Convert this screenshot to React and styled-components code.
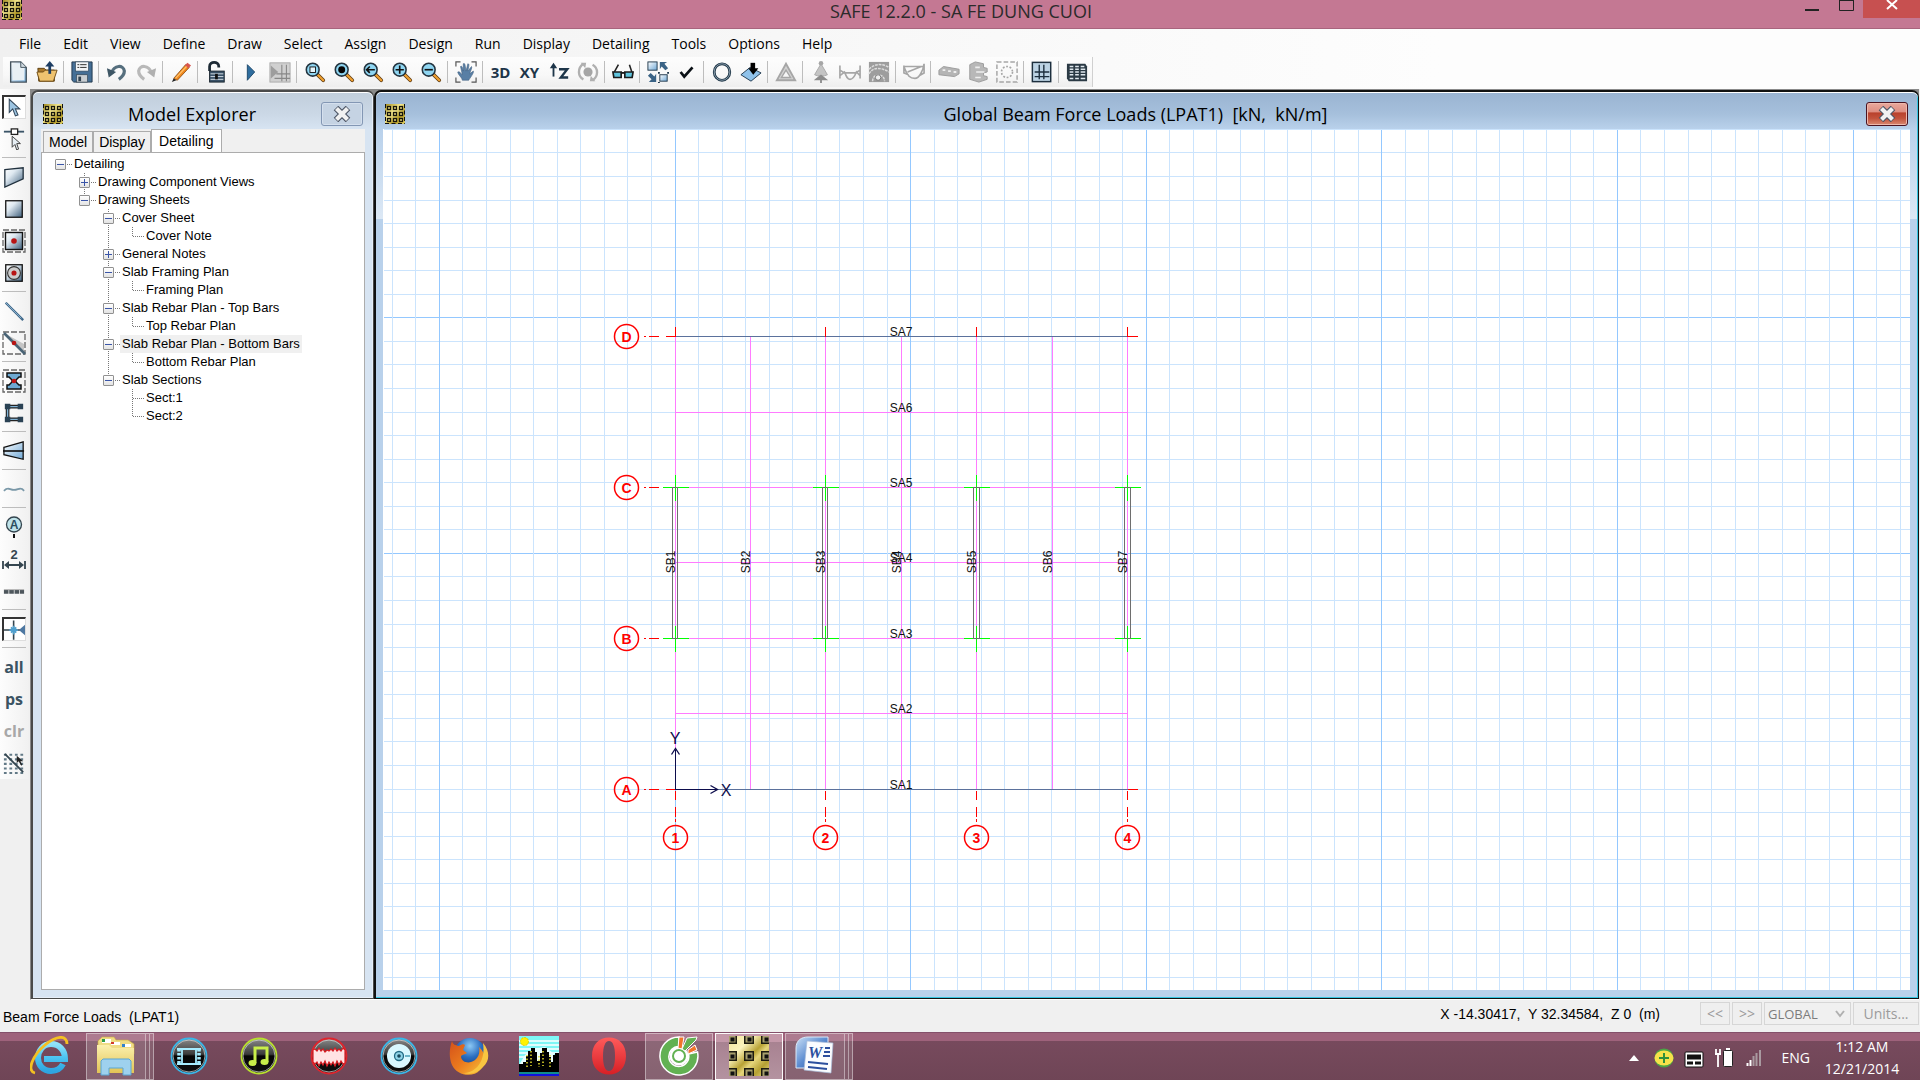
import React from 'react';
import styled, { createGlobalStyle, css } from 'styled-components';

const ui = '"Open Sans", "Noto Sans", sans-serif';
const sans = '"Liberation Sans", Arial, sans-serif';

const GlobalStyle = createGlobalStyle`
  *, *::before, *::after { box-sizing: border-box; }
  body { margin: 0; background: #f0f0f0; color: #000; font-family: ${ui}; }
  button, select { font: inherit; color: inherit; margin: 0; padding: 0; border: 0; background: none; }
  ul { list-style: none; margin: 0; padding: 0; }
  svg { display: block; }
`;

const Page = styled.div`
  display: flex;
  flex-direction: column;
  height: 100vh;
  overflow: hidden;
`;

/* ---------- application title bar ---------- */

const TitleBar = styled.header`
  display: grid;
  grid-template-columns: 1fr auto 1fr;
  align-items: start;
  height: 29px;
  flex: none;
  padding-left: 2px;
  background: #c47893;
  border-bottom: 1px solid #a8647d;
`;

const AppTitle = styled.h1`
  margin: 0;
  font-size: 18px;
  line-height: 22px;
  font-weight: 400;
  color: #2b2b2b;
`;

const WindowControls = styled.div`
  display: flex;
  justify-content: flex-end;
`;

const ControlButton = styled.button`
  display: flex;
  justify-content: center;
  width: ${(p) => (p.$close ? 57 : 34)}px;
  height: 18px;
  background: ${(p) => (p.$close ? '#c75050' : 'transparent')};
`;

/* ---------- menu ---------- */

const MenuBar = styled.nav`
  display: flex;
  flex: none;
  height: 28px;
  padding: 1px 8px 0;
  background: linear-gradient(90deg, #f0f0f0, #fdfdfd 75%);
`;

const MenuItem = styled.button`
  padding: 0 11px;
  font-size: 14px;
  line-height: 28px;
`;

/* ---------- toolbars ---------- */

const ToolRow = styled.div`
  display: flex;
  flex: none;
  height: 32px;
  padding: 0 3px;
  background: linear-gradient(90deg, #f0f0f0, #fdfdfd 75%);
`;

const TopTools = styled.div`
  display: flex;
  align-items: center;
  height: 30px;
  padding-right: 1px;
  border-right: 1px solid #d0d0d0;
  background: linear-gradient(#fdfdfd, #f8f8f8 60%, #eeeeee);
`;

const Separator = styled.span`
  flex: none;
  ${(p) => (p.$vertical
    ? css`width: 1px; height: 22px; margin: 0 3px 0 2px;`
    : css`width: 24px; height: 1px; margin: 2px 0 3px 2px;`)}
  background: #bdbdbd;
`;

const ToolButton = styled.button`
  display: flex;
  align-items: center;
  justify-content: center;
  flex: none;
  width: 29px;
  height: 26px;
  font-size: 15px;
  line-height: 20px;
  font-weight: 700;
  color: #1d3549;
`;

const SideTools = styled.div`
  display: flex;
  flex-direction: column;
  align-self: flex-start;
  width: 28px;
  padding-top: 2px;
  background: linear-gradient(90deg, #fdfdfd, #f1f1f1);
`;

const SideButton = styled.button`
  display: flex;
  align-items: center;
  justify-content: center;
  flex: none;
  width: 24px;
  height: 24px;
  margin: 4px 0 4px 2px;
  font-size: 16px;
  line-height: 20px;
  font-weight: 700;
  color: ${(p) => (p.disabled ? '#a8a8a8' : '#3b5363')};
  ${(p) => p.$pressed && css`
    background: #fff;
    border-top: 2px solid #333;
    border-left: 2px solid #333;
    border-right: 1px solid #ddd;
    border-bottom: 1px solid #ddd;
  `}
`;

/* ---------- work area ---------- */

const Work = styled.div`
  display: flex;
  flex: 1;
  min-height: 0;
`;

const Rail = styled.aside`
  display: flex;
  flex: none;
  width: 30px;
  background: #f0f0f0;
`;

const Desktop = styled.main`
  display: flex;
  flex: 1;
  min-width: 0;
  margin-right: 1px;
  border: 1px solid #8a8a8a;
  border-bottom-color: #fff;
  border-right: 0;
  background: #8a8a8a;
`;

const frameTop = (p) => (p.$active
  ? 'linear-gradient(#99b3d1, #a6c0dc 60%, #b9d1eb)'
  : 'linear-gradient(#c1cedb, #cbd8e6 60%, #d7e4f2)');

const Window = styled.section`
  display: flex;
  flex-direction: column;
  ${(p) => (p.$active ? css`flex: 1;` : css`flex: none; width: 343px;`)}
  min-width: 0;
  padding: 0 8px 8px ${(p) => (p.$active ? 7 : 8)}px;
  border: 2px solid ${(p) => (p.$active ? '#111' : '#4a4a4a')};
  border-right-width: 1px;
  border-bottom-width: 1px;
  border-radius: 7px 7px 0 0;
  box-shadow: inset 0 1px 0 #fff, inset -1px -1px 0 ${(p) => (p.$active ? '#35c5e0' : '#e6eef8')};
  background:
    ${frameTop} 0 0 / 100% 37px no-repeat,
    linear-gradient(${(p) => (p.$active ? '#b9d1eb, #dce8f5' : '#d7e4f2, #d7e4f2')}) 0 37px / 100% 90px no-repeat,
    ${(p) => (p.$active ? '#b9d1eb' : '#d7e4f2')};
`;

const WindowTitle = styled.div`
  display: flex;
  align-items: center;
  flex: none;
  height: 37px;
  padding: 7px 2px 0;
`;

const WindowCaption = styled.h2`
  flex: 1;
  margin: 0;
  font-size: 18px;
  line-height: 24px;
  font-weight: 400;
  text-align: center;
  white-space: pre;
`;

const CloseButton = styled.button`
  display: flex;
  align-items: center;
  justify-content: center;
  width: 42px;
  height: 24px;
  border-radius: 3px;
  ${(p) => (p.$active
    ? css`
      border: 1px solid #4b1320;
      box-shadow: inset 0 0 0 1px #eeb8ab;
      background: linear-gradient(#e9a99d, #dd8d80 42%, #b8402b 44%, #c2533c 70%, #d98a72);`
    : css`
      border: 1px solid #8397b4;
      box-shadow: inset 0 0 0 1px #d5e0ee;
      background: #c5d3e3;`)}
`;

const Tabs = styled.div`
  display: flex;
  align-items: flex-end;
  flex: none;
  height: 23px;
  padding-left: 2px;
  background: #f0f0f0;
`;

const Tab = styled.button`
  height: ${(p) => (p.$selected ? 24 : 21)}px;
  margin-bottom: ${(p) => (p.$selected ? -1 : 0)}px;
  padding: 0 ${(p) => (p.$selected ? 7 : 5)}px ${(p) => (p.$selected ? 2 : 0)}px;
  border: 1px solid #acacac;
  border-bottom: 0;
  background: ${(p) => (p.$selected ? '#fff' : '#f0f0f0')};
  font-family: ${sans};
  font-size: 14px;
  line-height: 18px;
`;

const TabPanel = styled.div`
  flex: 1;
  min-height: 0;
  padding: 2px 0 0 13px;
  border: 1px solid #acacac;
  background: #fff;
`;

const TreeList = styled.ul`
  margin-left: ${(p) => (p.$root ? 0 : 24)}px;
`;

const TreeItem = styled.li`
  background: ${(p) => (p.$root ? 'none' : 'repeating-linear-gradient(#777 0 1px, transparent 1px 2px) 5px 0 no-repeat')};
  background-size: 1px ${(p) => (p.$last ? '10px' : '100%')};
`;

const TreeRow = styled.div`
  display: flex;
  align-items: center;
  height: 18px;
`;

const TreeToggle = styled.button`
  flex: none;
  width: 11px;
  height: 11px;
  border: 1px solid #919191;
  border-radius: 1px;
  background:
    linear-gradient(#3a55a8, #3a55a8) center / 7px 1px no-repeat,
    ${(p) => !p.$open && 'linear-gradient(#3a55a8, #3a55a8) center / 1px 7px no-repeat,'}
    linear-gradient(#fff, #e3e3e3);
`;

const TreeStem = styled.span`
  flex: none;
  width: ${(p) => (p.$leaf ? 11 : 5)}px;
  height: 1px;
  margin-left: ${(p) => (p.$leaf ? 6 : 1)}px;
  background: repeating-linear-gradient(90deg, #777 0 1px, transparent 1px 2px);
`;

const TreeLabel = styled.span`
  padding: 0 2px;
  background: ${(p) => (p.$marked ? '#f0f0f0' : 'transparent')};
  font-family: ${sans};
  font-size: 13px;
  line-height: 18px;
  white-space: nowrap;
`;

const PlanCanvas = styled.svg`
  flex: 1;
  width: 100%;
  min-height: 0;
  background: #fff;
  font-family: ${sans};
`;

/* ---------- status bar ---------- */

const StatusBar = styled.footer`
  display: flex;
  align-items: flex-start;
  gap: 2px;
  flex: none;
  height: 32px;
  padding: 2px 1px 0 3px;
  font-family: ${sans};
  font-size: 14px;
  line-height: 24px;
  white-space: pre;
`;

const StatusText = styled.span`
  flex: 1;
  padding-top: 3px;
`;

const Coordinates = styled.span`
  margin-right: 38px;
`;

const StatusButton = styled.button`
  width: ${(p) => (p.$wide ? 66 : 30)}px;
  height: 23px;
  border: 1px solid #d6d6d6;
  background: #efefef;
  color: #9b9b9b;
  font-family: ${ui};
  font-size: 14px;
  line-height: 20px;
`;

const SystemPicker = styled.label`
  display: flex;
  align-items: center;
  width: 87px;
  height: 23px;
  padding-right: 5px;
  border: 1px solid #d6d6d6;
  color: #7c7c7c;
`;

const SystemSelect = styled.select`
  flex: 1;
  min-width: 0;
  padding-left: 3px;
  appearance: none;
  opacity: 1;
  color: #7c7c7c;
  font-family: ${ui};
  font-size: 13px;
  line-height: 20px;
`;

/* ---------- taskbar ---------- */

const Taskbar = styled.div`
  display: flex;
  align-items: stretch;
  flex: none;
  height: 48px;
  padding: 0 18px 0 15px;
  border-top: 1px solid #84506a;
  background: linear-gradient(#9e627b 0 8px, #774a5d 8px, #6f4556);
  color: #fff;
`;

const TaskButton = styled.button`
  display: flex;
  align-items: center;
  justify-content: center;
  flex: none;
  width: 68px;
  height: 47px;
  margin: 0 1px;
  padding-bottom: 2px;
  ${(p) => p.$running && css`
    border: 1px solid rgba(255, 255, 255, ${p.$front ? 0.95 : 0.42});
    background: ${p.$front
      ? 'linear-gradient(#c498a9 0 8px, #a88291 8px, #b493a0)'
      : 'rgba(255, 255, 255, 0.16)'};
  `}
  ${(p) => p.$stack && css`
    width: 60px;
    margin-right: 0;
  `}
`;

const StackEdge = styled.span`
  width: 4px;
  height: 47px;
  border: 1px solid rgba(255, 255, 255, 0.42);
  border-left: 0;
  background: rgba(255, 255, 255, 0.12);
`;

const Tray = styled.div`
  display: flex;
  align-items: center;
  gap: 10px;
  margin-left: auto;
  padding-top: 2px;
`;

const TrayButton = styled.button`
  display: flex;
  align-items: center;
  justify-content: center;
  width: 20px;
  height: 24px;
`;

const Language = styled.span`
  padding: 0 2px 0 8px;
  font-size: 14px;
`;

const Clock = styled.time`
  width: 80px;
  font-size: 14px;
  line-height: 22px;
  text-align: center;
`;

/* ---------- icons ---------- */

const Svg = ({ s = 22, children }) => (
  <svg width={s} height={s} viewBox="0 0 24 24" fill="none" aria-hidden="true">{children}</svg>
);

const Gradients = () => (
  <svg width="0" height="0" aria-hidden="true">
    <defs>
      <linearGradient id="gold" x1="0" y1="0" x2="1" y2="1">
        <stop offset="0" stopColor="#f3e69a" /><stop offset=".3" stopColor="#fbf3bd" />
        <stop offset=".52" stopColor="#b8a234" /><stop offset=".62" stopColor="#e6d67c" />
        <stop offset=".8" stopColor="#b5a033" /><stop offset="1" stopColor="#e9db84" />
      </linearGradient>
      <linearGradient id="goldSmall" x1="0" y1="0" x2="1" y2="1">
        <stop offset="0" stopColor="#a08a1c" /><stop offset=".4" stopColor="#f4e88e" />
        <stop offset=".7" stopColor="#b39a26" /><stop offset="1" stopColor="#e2d36a" />
      </linearGradient>
      <linearGradient id="steel" x1="0" y1="0" x2="1" y2="1">
        <stop offset="0" stopColor="#fff" /><stop offset=".35" stopColor="#dfe9f1" /><stop offset="1" stopColor="#3e5f7c" />
      </linearGradient>
      <linearGradient id="sky" x1="0" y1="0" x2="1" y2="1">
        <stop offset="0" stopColor="#fff" /><stop offset="1" stopColor="#6fa8d6" />
      </linearGradient>
      <linearGradient id="ie" x1="0" y1="0" x2="0" y2="1">
        <stop offset="0" stopColor="#8fe3fb" /><stop offset=".5" stopColor="#4cc3f1" /><stop offset="1" stopColor="#2ea5e0" />
      </linearGradient>
      <linearGradient id="folder" x1="0" y1="0" x2="0" y2="1">
        <stop offset="0" stopColor="#fbf0ae" /><stop offset="1" stopColor="#e3c455" />
      </linearGradient>
      <linearGradient id="black" x1="0" y1="0" x2="0" y2="1">
        <stop offset="0" stopColor="#8b8b8b" /><stop offset=".45" stopColor="#3a3a3a" /><stop offset=".5" stopColor="#050505" /><stop offset="1" stopColor="#111" />
      </linearGradient>
      <linearGradient id="opera" x1="0" y1="0" x2="0" y2="1">
        <stop offset="0" stopColor="#ff5b5b" /><stop offset="1" stopColor="#d71f25" />
      </linearGradient>
      <linearGradient id="word" x1="0" y1="0" x2="1" y2="1">
        <stop offset="0" stopColor="#c9dff6" /><stop offset=".5" stopColor="#5b8bd0" /><stop offset="1" stopColor="#1f4aa0" />
      </linearGradient>
      <radialGradient id="globe" cx=".5" cy=".25" r=".7">
        <stop offset="0" stopColor="#8cc8f4" /><stop offset=".5" stopColor="#2b6ec0" /><stop offset="1" stopColor="#123a7c" />
      </radialGradient>
      <linearGradient id="fox" x1="0" y1="0" x2="1" y2="1">
        <stop offset="0" stopColor="#d4511a" /><stop offset=".5" stopColor="#ea7a1d" /><stop offset="1" stopColor="#f8c63c" />
      </linearGradient>
    </defs>
  </svg>
);

const SafeLogo = ({ size = 20 }) => {
  const small = size < 30;
  const spots = small ? [4, 16, 28] : [-2, 15, 32];
  return (
    <svg width={size} height={size} viewBox="0 0 40 40" aria-hidden="true">
      <rect width="40" height="40" fill={small ? 'url(#goldSmall)' : 'url(#gold)'} />
      {spots.map((y) => spots.map((x) => (small ? (
        <rect key={`${x}-${y}`} x={x + 1} y={y + 1} width="6" height="6" fill="#d9cc78" stroke="#17160c" strokeWidth="2.500" />
      ) : (
        <g key={`${x}-${y}`}>
          <rect x={x} y={y} width="10" height="10" fill="#1c1b10" />
          <rect x={x + 1.5} y={y + 1.5} width="7" height="7" fill="#a79f6c" />
          <rect x={x + 3.5} y={y + 3.5} width="4" height="4" fill="#111" />
        </g>
      ))))}
      {small && <path d="M1 0v40M0 39h40M39 0v40" stroke="#111" strokeWidth="2" strokeDasharray="8 5" />}
    </svg>
  );
};

const Glass = ({ children }) => (
  <Svg>
    <path d="M14 14l7 7" stroke="#5b3a12" strokeWidth="4" strokeLinecap="round" />
    <path d="M15 15l6 6" stroke="#f0a030" strokeWidth="2.400" strokeLinecap="round" />
    <circle cx="9.500" cy="9.500" r="7" fill="#8fd6f2" stroke="#24343f" strokeWidth="1.700" />
    {children}
  </Svg>
);

const g = '#a6a6a6';
const n = '#1d3549';

const topIcons = {
  New: <Svg><path d="M4 1h11l6 6v16H4z" fill="url(#sky)" stroke="#44525c" strokeWidth="1.500" /><path d="M6 3h8l5 5v13H6z" fill="#e9f0f4" /><path d="M15 1v6h6" fill="#cfd9e0" stroke="#44525c" /></Svg>,
  Open: <Svg><path d="M2 8h7l2 2h9v12H3z" fill="#a9772a" stroke="#5a3c0e" /><path d="M1 12h7l2-2h13l-4 12H4z" fill="#efc36f" stroke="#6b4a16" /><path d="M15 14V5" stroke="#1d3d63" strokeWidth="3" /><path d="M10 6l5-6 5 6z" fill="#1d3d63" /></Svg>,
  Save: <Svg><path d="M1 1h22v22H3l-2-2z" fill="#456f96" stroke="#1e3448" /><rect x="5" y="1" width="14" height="10" fill="#f2f5f7" stroke="#33485a" strokeWidth=".7" /><path d="M7 4h2m1 0h7M7 7h2m1 0h7" stroke="#222" /><rect x="6" y="15" width="12" height="8" fill="#c9ced2" stroke="#30404e" strokeWidth=".7" /><path d="M8 17h3v5H8z" fill="#30404e" /></Svg>,
  Undo: <Svg><path d="M6 13C9 4 19 4 20 11c0 5-3 7-6 9" stroke="#566f7e" strokeWidth="3.500" /><path d="M1 8l2 10 8-6z" fill="#3e5665" /></Svg>,
  Redo: <Svg><path d="M18 13C15 4 5 4 4 11c0 5 3 7 6 9" stroke="#b9b9b9" strokeWidth="3.500" /><path d="M23 8l-2 10-8-6z" fill="#b0b0b0" /></Svg>,
  Edit: <Svg><path d="M4 19L17 4l4 3L8 21z" fill="#f0871c" stroke="#7a3f07" strokeWidth=".8" /><path d="M16 5l3-3 4 3-3 3z" fill="#d8564e" /><path d="M4 19l-2 4 5-2z" fill="#222" /><path d="M6 19L18 6" stroke="#ffc36c" strokeWidth="1.300" /></Svg>,
  Unlock: <Svg><path d="M5 11V6c0-6 10-6 10 0v1" stroke="#1d2a35" strokeWidth="3" /><rect x="5" y="11" width="16" height="12" fill="#3a5268" stroke="#17232d" /><path d="M6 14h14M6 17h14M6 20h14" stroke="#dde5eb" strokeWidth="1" /><rect x="11" y="14" width="3" height="6" fill="#111" /></Svg>,
  Run: <Svg><path d="M8 4l8 8-8 9z" fill="#2f6d9e" stroke="#1b4669" /></Svg>,
  Mesh: <Svg><rect x="1" y="2" width="22" height="21" fill="#d0d0d0" stroke="#aaa" /><path d="M2 5l8 7-8 7z" fill="#9d9d9d" /><path d="M14 4v18M19 4v18M8 14h15M6 19h17" stroke="#888" strokeWidth="1.200" /></Svg>,
  'Zoom window': <Glass><rect x="6.500" y="6.500" width="6" height="6" stroke="#111" fill="#e6f6fc" /></Glass>,
  'Zoom all': <Glass><circle cx="9.500" cy="9.500" r="3.800" fill="#050505" /></Glass>,
  'Zoom previous': <Glass><path d="M5 9.500h9M8.500 6l-3.500 3.500L8.500 13" stroke="#111" strokeWidth="1.800" /></Glass>,
  'Zoom in': <Glass><path d="M5 9.500h9M9.500 5v9" stroke="#111" strokeWidth="1.800" /></Glass>,
  'Zoom out': <Glass><path d="M5 9.500h9" stroke="#111" strokeWidth="1.800" /></Glass>,
  Pan: <Svg><path d="M1 6V1h5M18 1h5v5M23 18v5h-5M6 23H1v-5" stroke="#555" strokeWidth="1.300" /><path d="M8 21c0-3-5-6-5-9 2-1 3 1 5 3L6 6c2-1 2 1 3 5l0-8c2-1 2 1 3 8l2-8c2 0 1 3 0 8l4-5c1 1-1 5-2 8l4-3c1 2-4 8-5 10z" fill="#587fa5" stroke="#3c5c7c" strokeWidth=".6" /></Svg>,
  'Axis Z': <Svg><path d="M6 17V6" stroke={n} strokeWidth="2" /><path d="M2 8l4-6 4 6z" fill={n} /><path d="M12 9h9l-7 9h8" stroke={n} strokeWidth="2.600" /></Svg>,
  Rotate: <Svg><circle cx="12" cy="12" r="5" fill="#a5a5a5" /><path d="M7 3C0 8 1 17 7 20M17 4c7 4 6 13 0 17" stroke="#b0b0b0" strokeWidth="2.600" /><path d="M4 2h6l-1 6zM20 22h-6l1-6z" fill="#b0b0b0" /></Svg>,
  Glasses: <Svg><path d="M2 13L7 4M22 13l-3-9" stroke="#222" strokeWidth="1.700" /><path d="M1 12h9v6H2zM14 12h9l-1 6h-8z" fill="#5fc3dc" stroke="#1b1b1b" strokeWidth="1.800" /><path d="M10 13h4" stroke="#1b1b1b" strokeWidth="2" /></Svg>,
  Extents: <Svg><rect x="1" y="1" width="10" height="9" fill="url(#sky)" stroke="#1d3549" /><rect x="14" y="15" width="8" height="7" fill="url(#sky)" stroke="#1d3549" /><path d="M14 1h8l-3 2 4 5-3 2-4-4-2 3zM10 23H2l3-3-4-4 3-3 4 4 2-3z" fill="#3a6386" /><path d="M12 13h2M22 13h2M12 24h2" stroke="#1d3549" strokeWidth="2" /></Svg>,
  Accept: <Svg><path d="M5 12l4 5 9-10" stroke="#0b1116" strokeWidth="3" /></Svg>,
  Ring: <Svg><ellipse cx="12" cy="12" rx="8.500" ry="9" stroke="#1f3647" strokeWidth="3" /><ellipse cx="12" cy="12" rx="8.500" ry="9" stroke="#a8bccb" strokeWidth=".8" /></Svg>,
  Assign: <Svg><path d="M1 15l10-8 12 6-11 9z" fill="#8fc2ea" stroke="#1d3549" /><path d="M14 2v8" stroke="#000" strokeWidth="5" /><path d="M9 8h11l-5.500 7z" fill="#000" /></Svg>,
  Undeformed: <Svg><path d="M12 3l10 18H2z" stroke={g} strokeWidth="2" fill="#d2d2d2" /><path d="M12 10l5 8H7z" fill="#f6f6f6" stroke={g} strokeWidth="1.500" /></Svg>,
  Reactions: <Svg><path d="M12 3l7 12c-3 2-11 2-14 0z" fill="#c4c4c4" stroke={g} /><circle cx="12" cy="2.500" r="2.500" fill={g} /><path d="M12 25v-6M7 20l5-4 5 4z" stroke="#8c8c8c" strokeWidth="2" fill="#8c8c8c" /></Svg>,
  Deformed: <Svg><path d="M1 5v14M23 5v14M1 10l5 3h12l5-3M1 16l5-4c2 5 3 8 6 8s5-3 7-8l4 4" stroke={g} strokeWidth="1.800" /></Svg>,
  Contours: <Svg><rect x="1" y="1" width="22" height="22" fill="#9d9d9d" /><path d="M1 14C6 6 14 7 23 12M1 9C8 2 16 3 23 7M5 22c0-9 13-9 13 0" stroke="#ddd" strokeWidth="1.600" strokeDasharray="3 1" /><circle cx="11" cy="18" r="3" fill="#eee" stroke="#777" /></Svg>,
  Moments: <Svg><path d="M1 5v8l5 2M23 3v10l-5 3M1 6h22M1 6c4 11 7 13 12 13S22 10 23 3M5 12l15-6" stroke={g} strokeWidth="1.800" /></Svg>,
  Beam: <Svg><path d="M1 10l5-4 17 3v5l-5 3-17-2z" fill="#b5b5b5" stroke="#999" /><path d="M5 10h3M11 11h3M17 12h3" stroke="#eee" strokeWidth="2" /></Svg>,
  Block: <Svg><path d="M3 4l6-3 9 2v4l4 1v4l-4 1v3l4 1v3l-9 3-10-3z" fill="#b8b8b8" stroke="#999" /><path d="M9 7h5M10 12h9M9 18h6" stroke="#eee" strokeWidth="1.800" /></Svg>,
  Region: <Svg><rect x="1" y="1" width="22" height="22" stroke={g} strokeWidth="1.600" strokeDasharray="5 2.300" /><circle cx="12" cy="12" r="6" stroke={g} strokeWidth="1.800" strokeDasharray="2 1.800" /></Svg>,
  Grid: <Svg><rect x="1.500" y="1.500" width="20" height="21" fill="#bcd3e4" stroke="#1d2f3e" strokeWidth="1.600" /><path d="M9 4v16M14 4v16M4 12h16M4 17h16" stroke="#1d2f3e" strokeWidth="1.500" /></Svg>,
  Tables: <Svg><path d="M1 3h20l2 3v16H3L1 19z" fill="#2b3a45" /><path d="M4 6h4M10 6h4M16 6h4M4 9h4M10 9h4M16 9h5M4 12h4M10 12h4M16 12h5M4 15h4M10 15h4M16 15h5M4 19h4M10 19h4M16 19h5" stroke="#dfe8ee" strokeWidth="1.700" /></Svg>,
};

const topTools = [
  'New', 'Open', '|', 'Save', '|', 'Undo', 'Redo', '|', 'Edit', '|', 'Unlock', '|', 'Run', 'Mesh', '|',
  'Zoom window', 'Zoom all', 'Zoom previous', 'Zoom in', 'Zoom out', '|', 'Pan', '|', '3D', 'XY', 'Axis Z', 'Rotate', '|',
  'Glasses', '|', 'Extents', 'Accept', '|', 'Ring', 'Assign', '|', 'Undeformed', '|', 'Reactions', 'Deformed', 'Contours', '|',
  'Moments', '|', 'Beam', 'Block', 'Region', '|', 'Grid', '|', 'Tables',
];

const Dashed = () => <rect x="1" y="1" width="22" height="22" stroke="#666" strokeWidth="1.300" strokeDasharray="6 2" />;

const sideIcons = {
  Select: <Svg><path d="M6 2v15l4-4 3 8 3-1-3-7h5z" fill="#9cc4e2" stroke="#33475a" strokeWidth="1.200" /></Svg>,
  Reshape: <Svg><path d="M1 4h22" stroke="#3b5568" strokeWidth="2" /><rect x="9" y="1" width="7" height="6" fill="#fff" stroke="#222" strokeWidth="1.400" /><path d="M10 9v12l3-3 2 6 2-1-2-6h4z" fill="#e6eef4" stroke="#333" /></Svg>,
  Area: <Svg><path d="M2 4l20-2v12L2 23z" fill="url(#steel)" stroke="#20303d" strokeWidth="1.400" /></Svg>,
  Rectangle: <Svg><rect x="3" y="3" width="18" height="18" fill="url(#steel)" stroke="#111" strokeWidth="1.400" /></Svg>,
  'Quick area': <Svg s={24}><Dashed /><rect x="3.500" y="3.500" width="17" height="17" fill="url(#steel)" stroke="#111" strokeWidth="1.400" /><circle cx="12" cy="12" r="2.800" fill="#b81414" /></Svg>,
  Column: <Svg><rect x="3" y="3" width="18" height="18" fill="url(#steel)" stroke="#111" strokeWidth="1.400" /><circle cx="12" cy="12" r="7" fill="#ccc" stroke="#333" strokeWidth="1.200" /><circle cx="12" cy="12" r="2.800" fill="#b81414" /></Svg>,
  Line: <Svg><path d="M3 3l19 19" stroke="#3f6788" strokeWidth="2.600" /><path d="M3 3l17 17" stroke="#8db5d3" strokeWidth="1" /></Svg>,
  'Quick line': <Svg s={24}><Dashed /><path d="M2 2l20 20v-9z" fill="#c5c5c5" /><path d="M2 2l21 21" stroke="#4a6476" strokeWidth="2.600" /><circle cx="12" cy="12" r="2.300" fill="#b81414" /></Svg>,
  Section: <Svg s={24}><Dashed /><path d="M5 4h14v4h-2l-3 3v2l3 3h2v4H5v-4h2l3-3v-2L7 8H5z" fill="#6ea9d2" stroke="#111" strokeWidth="1.500" /><circle cx="12" cy="12" r="2.300" fill="#c01414" /></Svg>,
  Strip: <Svg><path d="M20 5H5v14h15" stroke="#222" strokeWidth="4" /><path d="M20 5H5v14h15" stroke="#7fb2d6" strokeWidth="1.500" /><path d="M2 2h6v6H2zM16 2h6v6h-6zM2 16h6v6H2zM16 16h6v6h-6z" fill="#2a4254" /></Svg>,
  Taper: <Svg><path d="M1 8l21-6v19L1 16z" fill="url(#sky)" stroke="#111" strokeWidth="1.400" /><path d="M0 12h23" stroke="#111" strokeWidth="1.800" /></Svg>,
  Tendon: <Svg><path d="M1 14c5-5 6-1 11-1s7-4 11 1" stroke="#7a98a8" strokeWidth="2" /></Svg>,
  'Grid bubble': <Svg s={24}><circle cx="12" cy="9.500" r="7.500" fill="#bfe3ea" stroke="#34454f" strokeWidth="1.300" /><path d="M12 19v4" stroke="#111" strokeWidth="2" /><text x="12" y="14" textAnchor="middle" fontFamily="Liberation Sans, sans-serif" fontSize="12" fontWeight="700" fill="#2a4d60">A</text></Svg>,
  Dimension: <Svg s={24}><path d="M1 14v8M23 14v8M4 18h16" stroke="#34454f" strokeWidth="1.800" /><path d="M2 18l5-4v8zM22 18l-5-4v8z" fill="#34454f" /><text x="12" y="12" textAnchor="middle" fontFamily="Liberation Sans, sans-serif" fontSize="13" fontWeight="700" fill="#34454f">2</text></Svg>,
  Wall: <Svg><path d="M1 13h22" stroke="#4d565c" strokeWidth="4" strokeDasharray="5 .8" /><path d="M1 10.500h22" stroke="#aaa" /></Svg>,
  Snap: <Svg><path d="M11 1v22M0 12h22" stroke="#34454f" strokeWidth="1.800" /><path d="M11 7v10M6 12h10M8 9l6 6M14 9l-6 6" stroke="#4fa0cf" strokeWidth="2" /><path d="M24 6v12l-7-6z" fill="#4d77a1" /></Svg>,
  Clear: <Svg><path d="M1 3h22M1 8h22M1 13h22M1 18h22M1 23h22" stroke="#627986" strokeWidth="2.300" strokeDasharray="3 3" /><path d="M2 2l20 20" stroke="#34454f" strokeWidth="2" /><path d="M15 4v8l2-2 3 5 1-1-2-4h3z" fill="#222" /></Svg>,
};

const sideTools = [
  'Select', 'Reshape', '|', 'Area', 'Rectangle', 'Quick area', 'Column', '|', 'Line', 'Quick line', '|',
  'Section', 'Strip', '|', 'Taper', '|', 'Tendon', '|', 'Grid bubble', 'Dimension', 'Wall', '|', 'Snap', '|',
  'all', 'ps', 'clr', 'Clear',
];

/* ---------- taskbar icons ---------- */

const Big = ({ children }) => (
  <svg width="40" height="40" viewBox="0 0 40 40" fill="none" aria-hidden="true">{children}</svg>
);

const Disc = ({ rim, children }) => (
  <Big>
    <circle cx="20" cy="20" r="17.500" fill="url(#black)" stroke={rim} strokeWidth="1.800" />
    <circle cx="20" cy="20" r="16" stroke="#ddd" strokeWidth=".7" />
    {children}
  </Big>
);

const city = 'M2 38V29h2v-3h3v-6h2v-5h3v-3h4v4h2v9h3v-8h2v-5h5v4h2v5h2v5h2v-7h2v-2h4v7h2v4h2v10z';

const apps = [
  { name: 'Internet Explorer', icon: <Big><path d="M33 28c-2 4-6 7-12 7-8 0-13-6-13-13S13 8 21 8s14 6 14 15H14" stroke="url(#ie)" strokeWidth="6" /><path d="M5 37C-4 35 3 19 15 9S37-1 37 8" stroke="#f4c022" strokeWidth="2.800" /></Big> },
  { name: 'File Explorer', running: true, stack: true, icon: <Big><path d="M2 5l4-4h12l2 3h12l6 4v10H2z" fill="#efdc85" stroke="#c9a93c" strokeWidth=".6" /><path d="M6 3h9v4H6zM15 6h9v3h-9zM26 8h9v3h-9z" fill="#fff" /><path d="M6 3h3v3H6z" fill="#2f9e44" /><path d="M15 6h3v2h-3z" fill="#d23b2d" /><path d="M26 8h3v3h-3z" fill="#3182ce" /><path d="M1 9h12l3 3h22v25H1z" fill="url(#folder)" /><path d="M5 39V25l2-2h26l2 2v14h-8v-7H13v7z" fill="#9ed1ee" stroke="#5ba6d3" /></Big> },
  { name: 'Video', icon: <Disc rim="#39b6e8"><path d="M8 13h24M8 28h24M13 13v15M27 13v15" stroke="#a6ecff" strokeWidth="1.800" /><path d="M10 13v15M30 13v15" stroke="#a6ecff" strokeWidth="3.500" strokeDasharray="2.500 1.500" /></Disc> },
  { name: 'Music', icon: <Disc rim="#b8e02e"><path d="M16 27V12h12v14" stroke="#c8ee4a" strokeWidth="3" /><ellipse cx="13.500" cy="27" rx="4" ry="3" fill="#c8ee4a" /><ellipse cx="25.500" cy="26" rx="4" ry="3" fill="#c8ee4a" /></Disc> },
  { name: 'Audio editor', icon: <Disc rim="#e0242c"><path d="M4 14l2-1 2 2 2-3 2 3 2-2 2 3 2-2 2 1 2-2 2 2 2-3 2 3 2-2 2 2 2-3 2 2v13l-2 1-2-3-2 4-2-4-2 5-2-4-2 3-2-3-2 4-2-5-2 4-2-3-2 4-2-4-2 2-2-2z" fill="#ffe3e3" stroke="#d81c22" strokeWidth="1.200" /></Disc> },
  { name: 'Disc', icon: <Disc rim="#39b6e8"><circle cx="20" cy="20" r="12" fill="#d9f8ff" /><circle cx="20" cy="20" r="4.500" fill="#8fd4e8" stroke="#216a83" strokeWidth="1.300" /><circle cx="20" cy="20" r="1.800" fill="#15475a" /><path d="M26 20h5" stroke="#6cb4c8" strokeWidth="2" /></Disc> },
  { name: 'Firefox', icon: <Big><circle cx="21" cy="18" r="16" fill="url(#globe)" /><path d="M3 5c1 4 3 4 7 5 3-2 5-2 6-1l-2 5 4 3c-2 2-6 1-6 4 1 6 9 7 14 3 4-3 5-8 4-13 8 7 7 17 1 23C24 42 8 40 3 29 0 22 0 13 3 5z" fill="url(#fox)" /><path d="M34 7c7 8 7 18 0 24-5 6-13 8-20 6 12 0 23-11 20-30z" fill="#f9c541" /></Big> },
  { name: 'Night city', icon: <Big><rect width="40" height="40" fill="#7ef6f6" /><path d="M0 5h40M0 9h40M0 13h40M0 17h40M0 21h40" stroke="#fff" strokeWidth="1.500" /><path d="M0 29l6-10 8-6 12-2 8 6 6 8v8H0z" fill="#eaffff" /><path d={city} fill="#000" /><path d="M0 28h40v9H0z" fill="#000" /><path d="M8 19v12M12 15v15M20 20v11M24 15v15M31 19v12" stroke="#e9df2b" strokeWidth="1.500" strokeDasharray="1.500 2" /><circle cx="5.500" cy="5.500" r="4" fill="#fff200" stroke="#d8c800" strokeWidth="1" strokeDasharray="2 1" /><path d="M0 37h40" stroke="#118b8b" strokeWidth="2" /><path d="M0 39h40" stroke="#1111dd" strokeWidth="2" /></Big> },
  { name: 'Opera', icon: <Big><path fillRule="evenodd" d="M20 1.500c10 0 17 7 17 18.500s-7 18.500-17 18.500S3 31.500 3 20 10 1.500 20 1.500zM20 5c-4 0-6 6-6 15s2 15 6 15 6-6 6-15-2-15-6-15z" fill="url(#opera)" /></Big> },
  { name: 'Browser', running: true, icon: <Big><path d="M20 1a19 19 0 1 0 18.500 15l-9 2A10 10 0 1 1 20 10.500z" fill="#62b152" stroke="#fff" strokeWidth="1.500" /><circle cx="20" cy="20" r="9.500" fill="#fff" /><circle cx="20" cy="20" r="7" fill="#62b152" /><circle cx="20" cy="20" r="5" fill="#fff" /><path d="M20 1h5l-2 12-4-1z" fill="#f0742a" stroke="#fff" /><path d="M28 2l10-1-1 3-11 11-3-2z" fill="#62b152" stroke="#fff" /><path d="M29 14l7-5 2 5-9 4z" fill="#f0742a" stroke="#fff" /></Big> },
  { name: 'SAFE', running: true, front: true, icon: <SafeLogo size={40} /> },
  { name: 'Word', running: true, stack: true, icon: <Big><path d="M1 32V12C1 4 7 1 13 1h20v31z" fill="url(#word)" stroke="#dbe9f8" /><path d="M12 5l26 2-2 30-27-3z" fill="#fafcff" stroke="#a9bcd8" strokeWidth=".7" /><text x="20" y="22" textAnchor="middle" fontFamily="Liberation Serif, serif" fontSize="16" fontWeight="700" fontStyle="italic" fill="#2b4f9e">W</text><path d="M30 12h5M29 16h6M28 20h7M13 26l20 2M13 31l19 2" stroke="#2b4f9e" strokeWidth="2" /></Big> },
];

/* ---------- plan drawing ---------- */

const ORIGIN = { x: 292, y: 660 };
const CELL = 23.56;
const HALF_BAY = 75.4;

const planX = (half) => Math.floor(ORIGIN.x + half * HALF_BAY);
const planY = (half) => Math.floor(ORIGIN.y - half * HALF_BAY);
const gridIndexes = (from, to) => Array.from({ length: to - from + 1 }, (_, i) => from + i);
const majorsLast = (list) => [...list].sort((a, b) => Number(a % 10 === 0) - Number(b % 10 === 0));

const Plan = () => {
  const columns = [0, 2, 4, 6];
  const x0 = planX(0);
  const x6 = planX(6);
  const y0 = planY(0);
  const y6 = planY(6);
  const gridLine = (major) => (major ? '#94c8ff' : '#cbe4fd');
  return (
    <PlanCanvas role="img" aria-label="Plan view">
      <g shapeRendering="crispEdges" transform="translate(.5 .5)" fill="none">
        {majorsLast(gridIndexes(-60, 28)).map((k) => {
          const y = Math.floor(ORIGIN.y - k * CELL);
          return <path key={`h${k}`} d={`M0 ${y}H4000`} stroke={gridLine(k % 10 === 0 && k !== 0)} />;
        })}
        {majorsLast(gridIndexes(-12, 150)).map((k) => {
          const x = Math.floor(ORIGIN.x + k * CELL);
          return <path key={`v${k}`} d={`M${x} 0V3000`} stroke={gridLine(k % 10 === 0)} />;
        })}
        <g stroke="#ff7bff">
          {gridIndexes(0, 6).map((i) => <path key={`sb${i}`} d={`M${planX(i)} ${y0}V${y6}`} />)}
          {gridIndexes(1, 5).map((i) => <path key={`sa${i}`} d={`M${x0} ${planY(i)}H${x6}`} />)}
        </g>
        <path d={`M${x0} ${y0}H${x6}M${x0} ${y6}H${x6}`} stroke="#5b719c" />
        <g stroke="#f00">
          {columns.map((c) => (
            <path key={c} d={`M${planX(c)} ${y6}v-10M${planX(c)} ${y0 + 1}v9M${planX(c)} ${y0 + 17}v10M${planX(c)} ${y0 + 29}v3`} />
          ))}
          {columns.map((c) => <path key={c} d={`M${x0 - 32} ${planY(c)}h2M${x0 - 27} ${planY(c)}h10`} />)}
          {[y0, y6].map((y) => <path key={y} d={`M${x0} ${y}h-10M${x6} ${y}h10`} />)}
        </g>
        <g stroke="#0f0">
          {columns.map((c) => [2, 4].map((r) => (
            <path key={`${c}${r}`} d={`M${planX(c) - 13} ${planY(r)}h26M${planX(c)} ${planY(r) - 13}v26`} />
          )))}
        </g>
        <g stroke="#6e6e6e">
          {columns.map((c) => <rect key={c} x={planX(c) - 3} y={planY(4)} width={c > 2 ? 6 : 5} height={planY(2) - planY(4)} />)}
        </g>
        <path d={`M${x0} ${y0}v-40M${x0} ${y0}h41`} stroke="#0c0c4c" />
      </g>
      <g transform="translate(.5 .5)" fill="none">
        <path d={`M${x0 - 4} ${y0 - 35}l4 -6l4 6M${x0 + 35} ${y0 - 4}l7 4l-7 4`} stroke="#0c0c4c" strokeWidth="1.3" />
        {columns.map((c, i) => (
          <g key={c} stroke="#f00" strokeWidth="1.5">
            <circle cx={x0 - 49} cy={planY(c)} r="12" />
            <circle cx={planX(c)} cy={y0 + 48} r="12" />
            <g stroke="none" fill="#f00" fontSize="14" fontWeight="700" textAnchor="middle">
              <text x={x0 - 49} y={planY(c) + 5}>{'ABCD'[i]}</text>
              <text x={planX(c)} y={y0 + 53}>{i + 1}</text>
            </g>
          </g>
        ))}
      </g>
      <g fontSize="12" textAnchor="middle" fill="#111">
        {gridIndexes(0, 6).map((i) => <text key={i} x={planX(3)} y={planY(i)}>{`SA${i + 1}`}</text>)}
        {gridIndexes(0, 6).map((i) => (
          <text key={i} transform={`translate(${planX(i)} ${planY(3)}) rotate(-90)`}>{`SB${i + 1}`}</text>
        ))}
      </g>
      <g fontSize="16" textAnchor="middle" fill="#0c0c4c">
        <text x={x0} y={y0 - 45}>Y</text>
        <text x={x0 + 51} y={y0 + 7}>X</text>
      </g>
    </PlanCanvas>
  );
};

/* ---------- tree ---------- */

const tree = [
  { label: 'Detailing', children: [
    { label: 'Drawing Component Views', closed: true },
    { label: 'Drawing Sheets', children: [
      { label: 'Cover Sheet', children: [{ label: 'Cover Note' }] },
      { label: 'General Notes', closed: true },
      { label: 'Slab Framing Plan', children: [{ label: 'Framing Plan' }] },
      { label: 'Slab Rebar Plan - Top Bars', children: [{ label: 'Top Rebar Plan' }] },
      { label: 'Slab Rebar Plan - Bottom Bars', marked: true, children: [{ label: 'Bottom Rebar Plan' }] },
      { label: 'Slab Sections', children: [{ label: 'Sect:1' }, { label: 'Sect:2' }] },
    ] },
  ] },
];

const Tree = ({ nodes, root }) => (
  <TreeList $root={root}>
    {nodes.map((node, i) => {
      const leaf = !node.children && !node.closed;
      return (
        <TreeItem key={node.label} $root={root} $last={i === nodes.length - 1}>
          <TreeRow>
            {!leaf && <TreeToggle $open={!node.closed} aria-label={`Toggle ${node.label}`} aria-expanded={!node.closed} />}
            <TreeStem $leaf={leaf} />
            <TreeLabel $marked={node.marked}>{node.label}</TreeLabel>
          </TreeRow>
          {node.children && <Tree nodes={node.children} />}
        </TreeItem>
      );
    })}
  </TreeList>
);

const CloseCross = () => (
  <svg width="18" height="16" viewBox="0 0 18 16" aria-hidden="true">
    <path d="M3 2l12 12M15 2L3 14" stroke="#4d5666" strokeWidth="6.500" />
    <path d="M3.500 2.500l11 11M14.500 2.500l-11 11" stroke="#f2f2f2" strokeWidth="4.200" />
  </svg>
);

const menus = ['File', 'Edit', 'View', 'Define', 'Draw', 'Select', 'Assign', 'Design', 'Run', 'Display', 'Detailing', 'Tools', 'Options', 'Help'];

export default function App() {
  return (
    <Page>
      <GlobalStyle />
      <Gradients />
      <TitleBar>
        <SafeLogo />
        <AppTitle>SAFE 12.2.0 - SA FE DUNG CUOI</AppTitle>
        <WindowControls>
          <ControlButton aria-label="Minimize"><svg width="14" height="18"><path d="M0 10h14" stroke="#222" strokeWidth="2" /></svg></ControlButton>
          <ControlButton aria-label="Maximize"><svg width="15" height="18"><path d="M.5 0v10.500h14V0M0 .5h15" stroke="#222" fill="none" /></svg></ControlButton>
          <ControlButton $close aria-label="Close"><svg width="12" height="18"><path d="M1 0l10 9M11 0L1 9" stroke="#fff" strokeWidth="2" /></svg></ControlButton>
        </WindowControls>
      </TitleBar>
      <MenuBar>{menus.map((m) => <MenuItem key={m}>{m}</MenuItem>)}</MenuBar>
      <ToolRow>
        <TopTools>
          {topTools.map((t, i) => (t === '|'
            ? <Separator key={i} $vertical />
            : <ToolButton key={t} aria-label={t}>{topIcons[t] || t}</ToolButton>))}
        </TopTools>
      </ToolRow>
      <Work>
        <Rail>
          <SideTools>
            {sideTools.map((t, i) => (t === '|'
              ? <Separator key={i} />
              : (
                <SideButton key={t} aria-label={t} disabled={t === 'clr'} $pressed={t === 'Select' || t === 'Snap'}>
                  {sideIcons[t] || t}
                </SideButton>
              )))}
          </SideTools>
        </Rail>
        <Desktop>
          <Window>
            <WindowTitle>
              <SafeLogo />
              <WindowCaption>Model Explorer</WindowCaption>
              <CloseButton aria-label="Close Model Explorer"><CloseCross /></CloseButton>
            </WindowTitle>
            <Tabs role="tablist">
              <Tab role="tab">Model</Tab>
              <Tab role="tab">Display</Tab>
              <Tab role="tab" aria-selected="true" $selected>Detailing</Tab>
            </Tabs>
            <TabPanel role="tabpanel"><Tree nodes={tree} root /></TabPanel>
          </Window>
          <Window $active>
            <WindowTitle>
              <SafeLogo />
              <WindowCaption>{'Global Beam Force Loads (LPAT1)  [kN,  kN/m]'}</WindowCaption>
              <CloseButton $active aria-label="Close plan view"><CloseCross /></CloseButton>
            </WindowTitle>
            <Plan />
          </Window>
        </Desktop>
      </Work>
      <StatusBar>
        <StatusText>{'Beam Force Loads  (LPAT1)'}</StatusText>
        <Coordinates>{'X -14.30417,  Y 32.34584,  Z 0  (m)'}</Coordinates>
        <StatusButton disabled>{'<<'}</StatusButton>
        <StatusButton disabled>{'>>'}</StatusButton>
        <SystemPicker>
          <SystemSelect disabled aria-label="Coordinate system" defaultValue="GLOBAL"><option>GLOBAL</option></SystemSelect>
          <svg width="10" height="8" aria-hidden="true"><path d="M1 1l4 5 4-5" fill="none" stroke="#b0b0b0" strokeWidth="2" /></svg>
        </SystemPicker>
        <StatusButton disabled $wide>Units...</StatusButton>
      </StatusBar>
      <Taskbar>
        {apps.map((a) => (
          <React.Fragment key={a.name}>
            <TaskButton aria-label={a.name} $running={a.running} $front={a.front} $stack={a.stack}>{a.icon}</TaskButton>
            {a.stack && <><StackEdge /><StackEdge /></>}
          </React.Fragment>
        ))}
        <Tray>
          <TrayButton aria-label="Show hidden icons"><svg width="10" height="6"><path d="M0 6l5-6 5 6z" fill="#fff" /></svg></TrayButton>
          <TrayButton aria-label="Updates"><svg width="20" height="20" viewBox="0 0 20 20"><circle cx="10" cy="10" r="9.500" fill="#4ba545" /><ellipse cx="10" cy="10" rx="9.500" ry="7.500" fill="#f6e24a" /><path d="M10 5v10M5 10h10" stroke="#2f8f3b" strokeWidth="2" /></svg></TrayButton>
          <TrayButton aria-label="Keyboard"><svg width="20" height="20" viewBox="0 0 20 20"><rect x="1" y="4" width="18" height="15" rx="1" fill="#fff" stroke="#111" /><path d="M3 9h14" stroke="#111" strokeWidth="5" /><path d="M3 15h6M11 15h6" stroke="#111" strokeWidth="3" /></svg></TrayButton>
          <TrayButton aria-label="Battery"><svg width="20" height="20" viewBox="0 0 20 20"><rect x="9.500" y="2.500" width="9" height="16" rx="1" fill="#fff" stroke="#222" /><path d="M12 1h4" stroke="#fff" strokeWidth="2" /><path d="M2 1v4M6 1v4M1 6h6M4 6v13" stroke="#fff" strokeWidth="1.800" /></svg></TrayButton>
          <TrayButton aria-label="Network"><svg width="16" height="17" viewBox="0 0 16 17"><path d="M1.500 14v3M4.500 11v6" stroke="#fff" strokeWidth="2" /><path d="M7.500 7v10M10.500 4v13M14 1v16" stroke="#a99aa0" strokeWidth="2" /></svg></TrayButton>
          <Language>ENG</Language>
          <Clock>1:12 AM<br />12/21/2014</Clock>
        </Tray>
      </Taskbar>
    </Page>
  );
}
